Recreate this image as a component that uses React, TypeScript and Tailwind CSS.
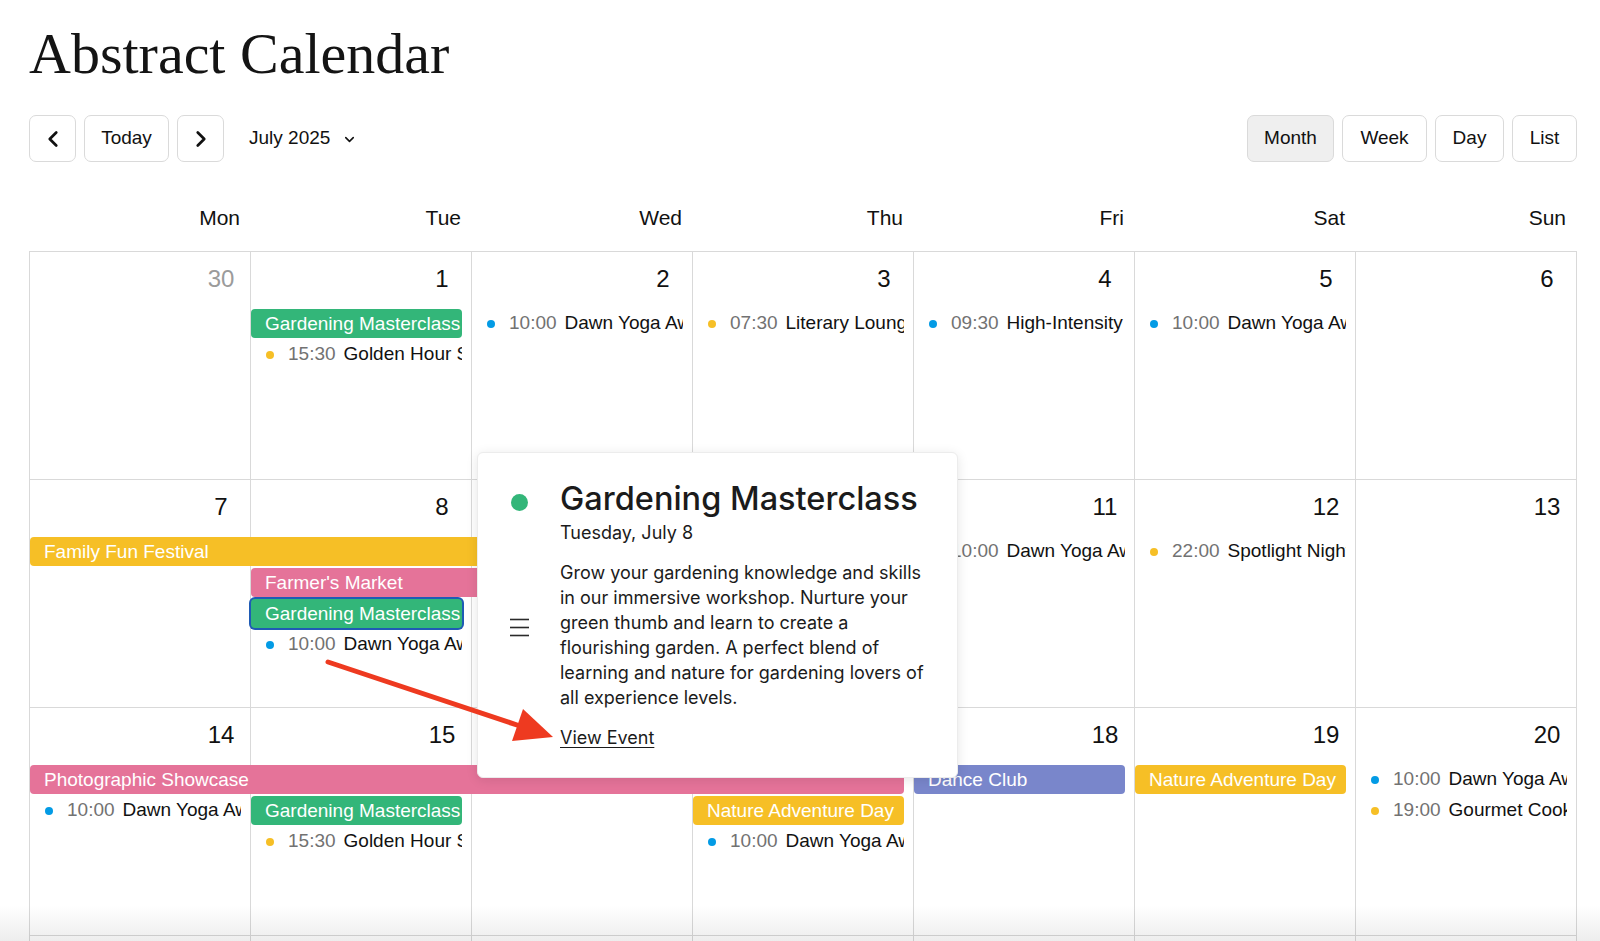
import { ChevronLeft, ChevronRight, ChevronDown } from 'lucide-react';

type CalEvent = {
  col: number;
  span?: number;
  slot: number;
  title: string;
  color: string;
  time?: string;
  selected?: boolean;
};

type Week = {
  days: { n: number; muted?: boolean }[];
  events: CalEvent[];
};

const colStart = ['', 'col-start-1', 'col-start-2', 'col-start-3', 'col-start-4', 'col-start-5', 'col-start-6', 'col-start-7'];
const colSpan = ['', 'col-span-1', 'col-span-2', 'col-span-3', 'col-span-4', 'col-span-5', 'col-span-6', 'col-span-7'];
const slotRow = ['', 'row-start-2', 'row-start-3', 'row-start-4', 'row-start-5'];

const GREEN = 'bg-[#33b679]';
const YELLOW = 'bg-[#f6bf26]';
const PINK = 'bg-[#e57399]';
const LAVENDER = 'bg-[#7986cb]';
const BLUE = 'bg-[#039be5]';

const d = (...ns: number[]) => ns.map((n) => ({ n }));

const weeks: Week[] = [
  {
    days: [{ n: 30, muted: true }, ...d(1, 2, 3, 4, 5, 6)],
    events: [
      { col: 2, slot: 1, title: 'Gardening Masterclass', color: GREEN },
      { col: 2, slot: 2, time: '15:30', title: 'Golden Hour Sunset Walk', color: YELLOW },
      { col: 3, slot: 1, time: '10:00', title: 'Dawn Yoga Awakening', color: BLUE },
      { col: 4, slot: 1, time: '07:30', title: 'Literary Lounge', color: YELLOW },
      { col: 5, slot: 1, time: '09:30', title: 'High-Intensity Training', color: BLUE },
      { col: 6, slot: 1, time: '10:00', title: 'Dawn Yoga Awakening', color: BLUE },
    ],
  },
  {
    days: d(7, 8, 9, 10, 11, 12, 13),
    events: [
      { col: 1, span: 3, slot: 1, title: 'Family Fun Festival', color: YELLOW },
      { col: 2, span: 2, slot: 2, title: "Farmer's Market", color: PINK },
      { col: 2, slot: 3, title: 'Gardening Masterclass', color: GREEN, selected: true },
      { col: 2, slot: 4, time: '10:00', title: 'Dawn Yoga Awakening', color: BLUE },
      { col: 5, slot: 1, time: '10:00', title: 'Dawn Yoga Awakening', color: BLUE },
      { col: 6, slot: 1, time: '22:00', title: 'Spotlight Night', color: YELLOW },
    ],
  },
  {
    days: d(14, 15, 16, 17, 18, 19, 20),
    events: [
      { col: 1, span: 4, slot: 1, title: 'Photographic Showcase', color: PINK },
      { col: 1, slot: 2, time: '10:00', title: 'Dawn Yoga Awakening', color: BLUE },
      { col: 2, slot: 2, title: 'Gardening Masterclass', color: GREEN },
      { col: 2, slot: 3, time: '15:30', title: 'Golden Hour Sunset Walk', color: YELLOW },
      { col: 4, slot: 2, title: 'Nature Adventure Day', color: YELLOW },
      { col: 4, slot: 3, time: '10:00', title: 'Dawn Yoga Awakening', color: BLUE },
      { col: 5, slot: 1, title: 'Dance Club', color: LAVENDER },
      { col: 6, slot: 1, title: 'Nature Adventure Day', color: YELLOW },
      { col: 7, slot: 1, time: '10:00', title: 'Dawn Yoga Awakening', color: BLUE },
      { col: 7, slot: 2, time: '19:00', title: 'Gourmet Cooking Class', color: YELLOW },
    ],
  },
  {
    days: d(21, 22, 23, 24, 25, 26, 27),
    events: [],
  },
];

function EventItem({ ev }: { ev: CalEvent }) {
  const place = `${colStart[ev.col]} ${colSpan[ev.span ?? 1]} ${slotRow[ev.slot]}`;
  if (!ev.time) {
    return (
      <div
        className={`${place} self-start h-[29px] mr-[10px] rounded-[4px] ${ev.color} ${
          ev.selected ? 'ring-2 ring-[#1f5bb5]' : ''
        } text-white pl-[14px] text-[19px] leading-[29px] whitespace-nowrap overflow-hidden`}
      >
        {ev.title}
      </div>
    );
  }
  return (
    <div className={`${place} self-start h-[29px] mr-[10px] flex items-center pl-[15px] text-[19px] whitespace-nowrap overflow-hidden`}>
      <span className={`w-[8px] h-[8px] rounded-full shrink-0 ${ev.color}`}></span>
      <span className="ml-[14px] text-[#727272]">{ev.time}</span>
      <span className="ml-[8px] text-[#111]">{ev.title}</span>
    </div>
  );
}

function WeekRow({ week }: { week: Week }) {
  return (
    <div className="grid grid-cols-7 grid-rows-[57px_31px_31px_31px_31px_1fr] h-[228px]">
      {week.days.map((day, i) => (
        <div
          key={i}
          className={`${colStart[i + 1]} row-span-full flex justify-end border-r border-b border-[#d9d9d9] pt-[11px] pr-[9px] text-[24px] leading-[32px] ${
            day.muted ? 'text-[#9b9b9b]' : 'text-[#111]'
          }`}
        >
          <span className="w-[40px] h-[32px] text-center">{day.n}</span>
        </div>
      ))}
      {week.events.map((ev, i) => (
        <EventItem key={i} ev={ev} />
      ))}
    </div>
  );
}

function Btn({ children, className = '' }: { children: React.ReactNode; className?: string }) {
  return (
    <button
      className={`h-[47px] flex items-center justify-center border border-[#dadada] rounded-[7px] text-[19px] text-[#111] ${className}`}
    >
      {children}
    </button>
  );
}

export default function App() {
  return (
    <div className="relative w-full h-[941px] overflow-hidden bg-white font-['Liberation_Sans',Arial,sans-serif] text-[#111]">
      <div className="pl-[29px] pr-[23px]">
        {/* Title */}
        <h1 className="pt-[25px] h-[82px] text-[58px] leading-[57px] font-['Liberation_Serif','Times_New_Roman',serif] text-[#141414]">
          Abstract Calendar
        </h1>

        {/* Toolbar */}
        <div className="mt-[33px] flex items-center justify-between">
          <div className="flex items-center gap-[8px]">
            <Btn className="w-[47px]">
              <ChevronLeft size={26} strokeWidth={2.5} />
            </Btn>
            <Btn className="w-[85px]">Today</Btn>
            <Btn className="w-[47px]">
              <ChevronRight size={26} strokeWidth={2.5} />
            </Btn>
            <div className="ml-[17px] flex items-center text-[19px]">
              July 2025
              <ChevronDown size={15} strokeWidth={2.5} className="ml-[12px] mt-[2px]" />
            </div>
          </div>
          <div className="flex items-center gap-[8px]">
            <Btn className="w-[87px] bg-[#efefef]">Month</Btn>
            <Btn className="w-[85px]">Week</Btn>
            <Btn className="w-[69px]">Day</Btn>
            <Btn className="w-[65px]">List</Btn>
          </div>
        </div>

        {/* Weekday header */}
        <div className="mt-[36px] mb-[13px] grid grid-cols-7 border-l border-transparent h-[40px] leading-[40px] text-[21px]">
          {['Mon', 'Tue', 'Wed', 'Thu', 'Fri', 'Sat', 'Sun'].map((w) => (
            <div key={w} className="text-right pr-[11px]">
              {w}
            </div>
          ))}
        </div>

        {/* Month grid */}
        <div className="border-l border-t border-[#d9d9d9]">
          {weeks.map((w, i) => (
            <WeekRow key={i} week={w} />
          ))}
        </div>
      </div>

      {/* Event popover */}
      <div className="absolute left-[477px] top-[452px] w-[481px] h-[326px] bg-white rounded-[6px] border border-[#ececec] shadow-[0_2px_12px_rgba(0,0,0,0.10)] pl-[31px] pt-[26px] font-['Inter',sans-serif] text-[#1b1b1b]">
        <div className="grid grid-cols-[20px_1fr] gap-x-[31px]">
          <div className="self-start flex justify-center pt-[15px]">
            <span className="w-[17px] h-[17px] rounded-full bg-[#33b679]"></span>
          </div>
          <div>
            <div className="text-[32.5px] leading-[40px] font-medium">Gardening Masterclass</div>
            <div className="mt-[2px] text-[18px] leading-[24px]">Tuesday, July 8</div>
          </div>

          <div className="self-center flex justify-center">
            <svg width="19" height="19" viewBox="0 0 19 19" fill="none" stroke="#2a2a2a" strokeWidth="1.6">
              <line x1="0" y1="1.5" x2="19" y2="1.5" />
              <line x1="0" y1="9.5" x2="19" y2="9.5" />
              <line x1="0" y1="17.5" x2="19" y2="17.5" />
            </svg>
          </div>
          <p className="mt-[15px] w-[372px] text-[18px] leading-[25px]">
            Grow your gardening knowledge and skills in our immersive workshop. Nurture your green thumb and learn to create a
            flourishing garden. A perfect blend of learning and nature for gardening lovers of all experience levels.
          </p>

          <div></div>
          <a className="mt-[15px] text-[18px] leading-[25px] underline underline-offset-[3px] self-start justify-self-start">
            View Event
          </a>
        </div>
      </div>

      {/* Annotation arrow */}
      <svg className="absolute left-0 top-0 pointer-events-none" width="1600" height="941" viewBox="0 0 1600 941">
        <line x1="328" y1="662" x2="520" y2="726" stroke="#ee3a20" strokeWidth="5" strokeLinecap="round" />
        <polygon points="553,737 512,741 523,709" fill="#ee3a20" />
      </svg>

      {/* Bottom fade */}
      <div className="absolute left-0 right-0 bottom-0 h-[36px] pointer-events-none bg-linear-to-b from-black/0 to-black/[0.07]"></div>
    </div>
  );
}
